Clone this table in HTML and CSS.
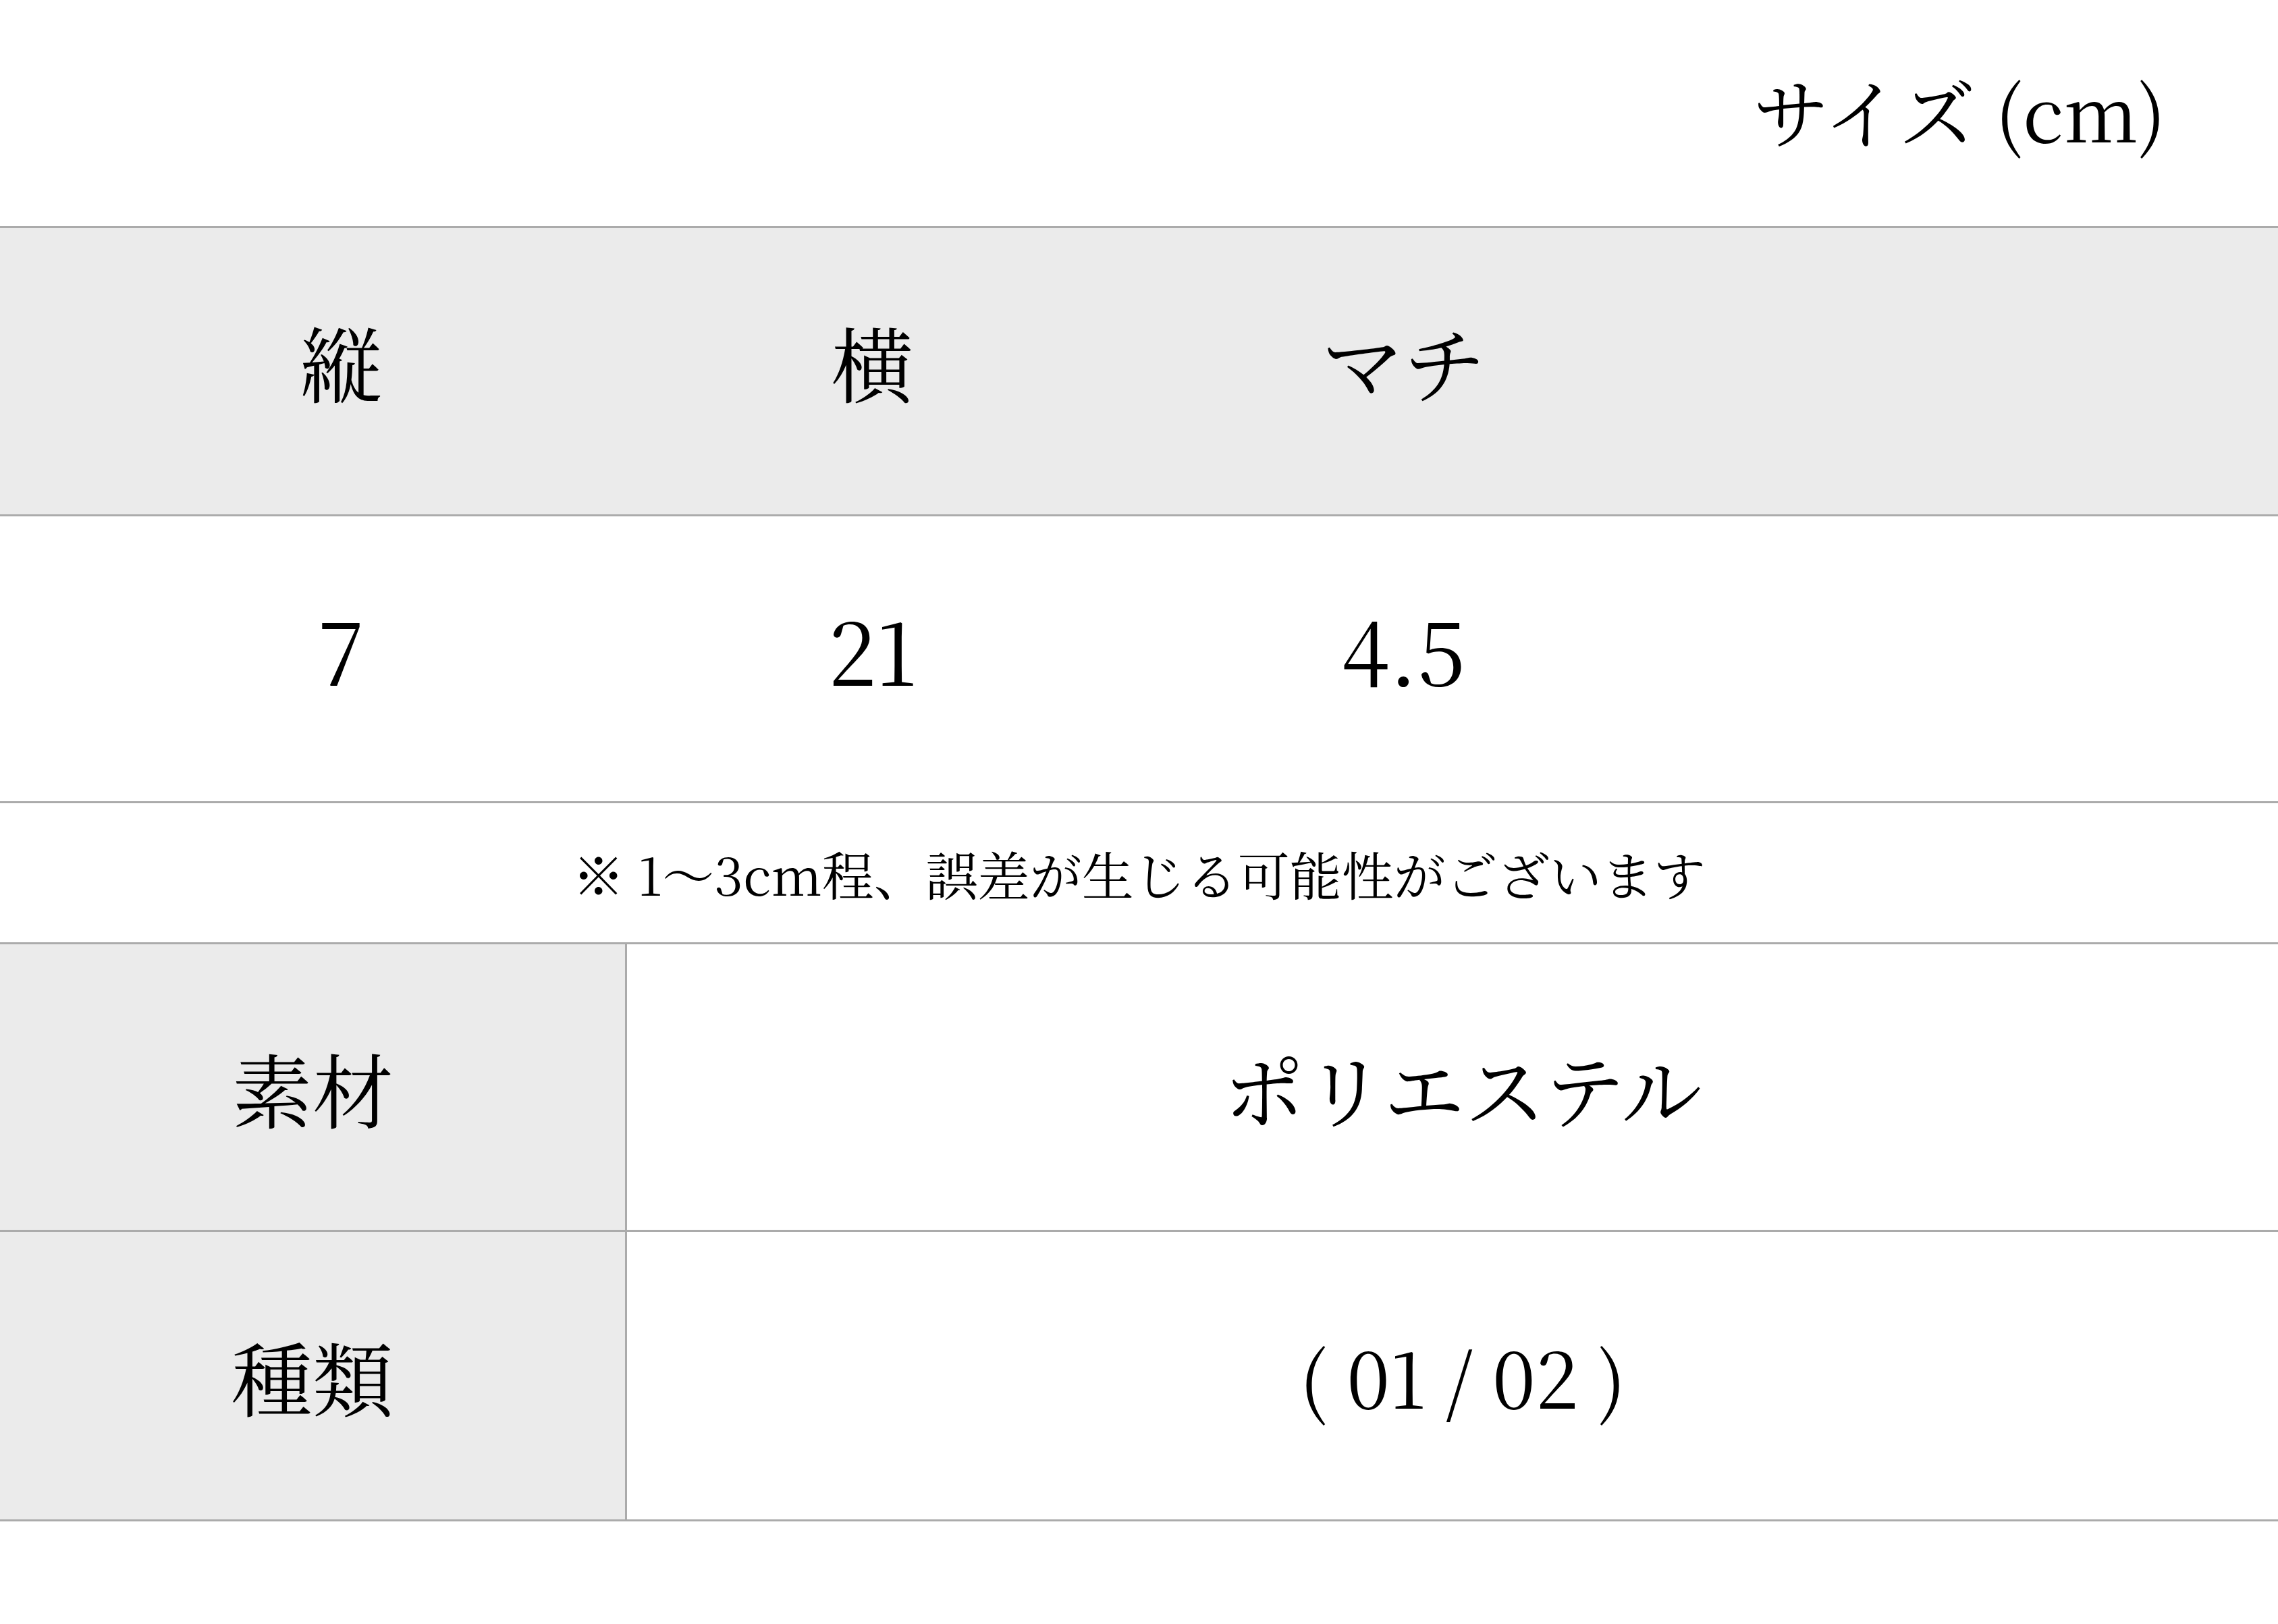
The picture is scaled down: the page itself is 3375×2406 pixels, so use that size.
FILE: index.html
```html
<!DOCTYPE html>
<html lang="ja">
<head>
<meta charset="utf-8">
<title>サイズ</title>
<link rel="stylesheet" href="styles.css">
</head>
<body>
<div class="page">
  <header class="title">
    <span class="title-text">サイズ (cm)</span>
  </header>
  <section class="size-table">
    <div class="size-row size-head">
      <div class="size-cell jp">縦</div>
      <div class="size-cell jp">横</div>
      <div class="size-cell jp">マチ</div>
    </div>
    <div class="size-row size-values">
      <div class="size-cell num">7</div>
      <div class="size-cell num">21</div>
      <div class="size-cell num">4.5</div>
    </div>
  </section>
  <p class="note">※ 1〜3cm程、誤差が生じる可能性がございます</p>
  <section class="spec">
    <div class="spec-row spec-row-material">
      <div class="spec-label">素材</div>
      <div class="spec-value">ポリエステル</div>
    </div>
    <div class="spec-row spec-row-type">
      <div class="spec-label">種類</div>
      <div class="spec-value num-value">( 01 / 02 )</div>
    </div>
  </section>
</div>
</body>
</html>
```

FILE: styles.css
```css
html, body {
  margin: 0;
  padding: 0;
  background: #ffffff;
}

body {
  width: 3375px;
  height: 2406px;
  overflow: hidden;
  color: #000000;
  font-family: "Noto Serif CJK JP", "Liberation Serif", "Noto Sans CJK JP", serif;
  font-weight: 400;
}

.page {
  display: flex;
  flex-direction: column;
}

.title {
  height: 335px;
  display: flex;
  justify-content: flex-end;
  align-items: center;
  padding-right: 166px;
  padding-bottom: 12px;
  box-sizing: border-box;
}

.title-text {
  font-size: 113px;
}

.size-row {
  display: grid;
  grid-template-columns: repeat(3, 787px);
  padding-left: 112px;
  border-top: 3px solid #ababab;
  align-items: center;
}

.size-head {
  height: 424px;
  background: #ebebeb;
}

.size-values {
  height: 422px;
}

.size-cell {
  text-align: center;
}

.size-cell.jp {
  font-size: 122px;
  margin-top: -32px;
}

.size-cell.num {
  font-size: 128px;
  margin-top: -30px;
}

.note {
  margin: 0;
  height: 206px;
  border-top: 3px solid #ababab;
  display: flex;
  justify-content: center;
  align-items: center;
  font-size: 77px;
}

.spec {
  border-bottom: 3px solid #ababab;
}

.spec-row {
  display: grid;
  grid-template-columns: 929px 1fr;
  border-top: 3px solid #ababab;
}

.spec-row-material {
  height: 423px;
}

.spec-row-type {
  height: 426px;
}

.spec-label {
  background: #ebebeb;
  border-right: 3px solid #ababab;
  display: flex;
  justify-content: center;
  align-items: center;
  font-size: 120px;
}

.spec-value {
  display: flex;
  justify-content: center;
  align-items: center;
  padding-left: 30px;
  font-size: 120px;
}

.num-value {
  font-size: 114px;
}
```
